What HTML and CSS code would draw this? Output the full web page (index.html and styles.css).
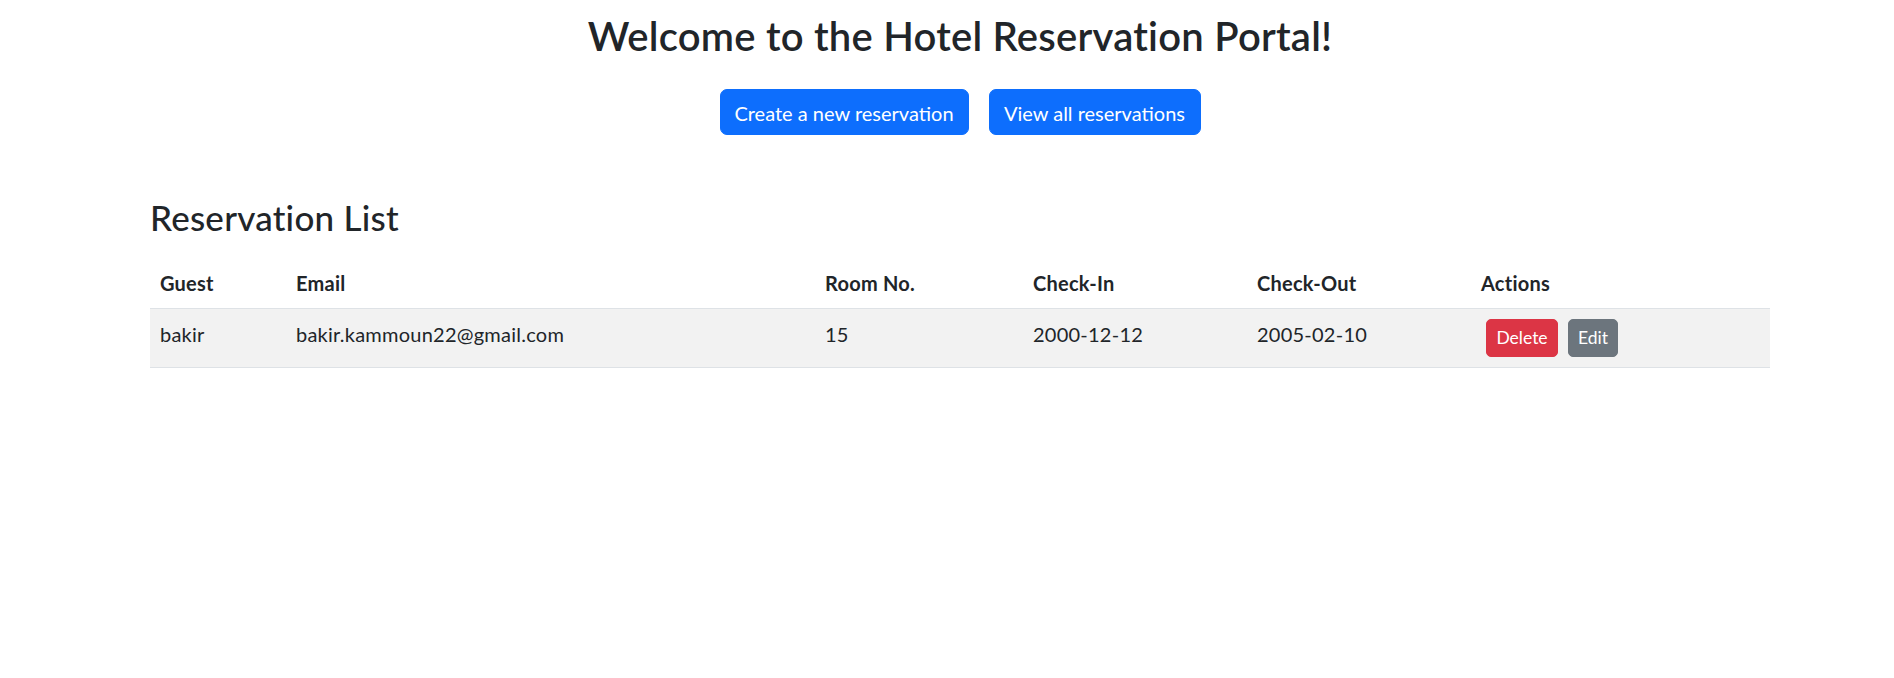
FILE: index.html
```html
<!DOCTYPE html>
<html lang="en">
<head>
<meta charset="utf-8">
<title>Hotel Reservation Portal</title>
<link rel="stylesheet" href="styles.css">
</head>
<body>
<main class="container">
  <h2 class="page-title">Welcome to the Hotel Reservation Portal!</h2>
  <div class="nav-actions">
    <a class="btn btn-primary btn-create" href="#">Create a new reservation</a>
    <a class="btn btn-primary btn-view" href="#">View all reservations</a>
  </div>
  <h3 class="section-title">Reservation List</h3>
  <table class="table">
    <colgroup>
      <col class="c-guest"><col class="c-email"><col class="c-room"><col class="c-in"><col class="c-out"><col class="c-actions">
    </colgroup>
    <thead>
      <tr><th>Guest</th><th>Email</th><th>Room No.</th><th>Check-In</th><th>Check-Out</th><th>Actions</th></tr>
    </thead>
    <tbody>
      <tr class="striped">
        <td>bakir</td>
        <td>bakir.kammoun22@gmail.com</td>
        <td>15</td>
        <td>2000-12-12</td>
        <td>2005-02-10</td>
        <td class="actions"><a class="btn btn-sm btn-danger" href="#">Delete</a><a class="btn btn-sm btn-secondary" href="#">Edit</a></td>
      </tr>
    </tbody>
  </table>
</main>
</body>
</html>
```
FILE: styles.css
```css
* { box-sizing: border-box; }
html, body { margin: 0; padding: 0; background: #fff; }
body {
  font-family: Lato, "Noto Sans", "Liberation Sans", sans-serif;
  font-size: 20px;
  line-height: 30px;
  letter-spacing: 0.012em;
  color: #212529;
}
.container {
  width: 1620px;
  margin-left: 150px;
  padding-top: 12px;
}
.page-title {
  margin: 0 0 29px;
  font-size: 40px;
  line-height: 48px;
  font-weight: 600;
  text-align: center;
}
.nav-actions {
  display: flex;
  justify-content: center;
  gap: 20px;
}
.btn {
  display: inline-block;
  text-decoration: none;
  color: #fff;
  border: 1px solid transparent;
  text-align: center;
  white-space: nowrap;
  letter-spacing: 0;
}
.btn-primary {
  background: #0d6efd;
  border-color: #0d6efd;
  font-size: 20px;
  line-height: 30px;
  padding: 8px 0 6px;
  border-radius: 7px;
}
.btn-create { width: 249px; }
.btn-view { width: 212px; }
.section-title {
  margin: 61px 0 20px;
  font-size: 35px;
  line-height: 42px;
  font-weight: 500;
}
.table {
  width: 1620px;
  border-collapse: collapse;
  table-layout: fixed;
}
.c-guest { width: 136px; }
.c-email { width: 529px; }
.c-room { width: 208px; }
.c-in { width: 224px; }
.c-out { width: 224px; }
.c-actions { width: 299px; }
.table th, .table td {
  padding: 10px 10px;
  text-align: left;
  vertical-align: top;
  border-bottom: 1px solid #dee2e6;
}
.table th { font-weight: 700; }
.table tr.striped td { background: #f2f2f2; }
.actions { font-size: 0; line-height: 0; }
.btn-sm {
  font-size: 17.5px;
  line-height: 26px;
  padding: 5px 0;
  border-radius: 5px;
  margin: 0 5px;
}
.btn-danger { background: #dc3545; border-color: #dc3545; width: 72px; }
.btn-secondary { background: #6c757d; border-color: #6c757d; width: 50px; }
```
